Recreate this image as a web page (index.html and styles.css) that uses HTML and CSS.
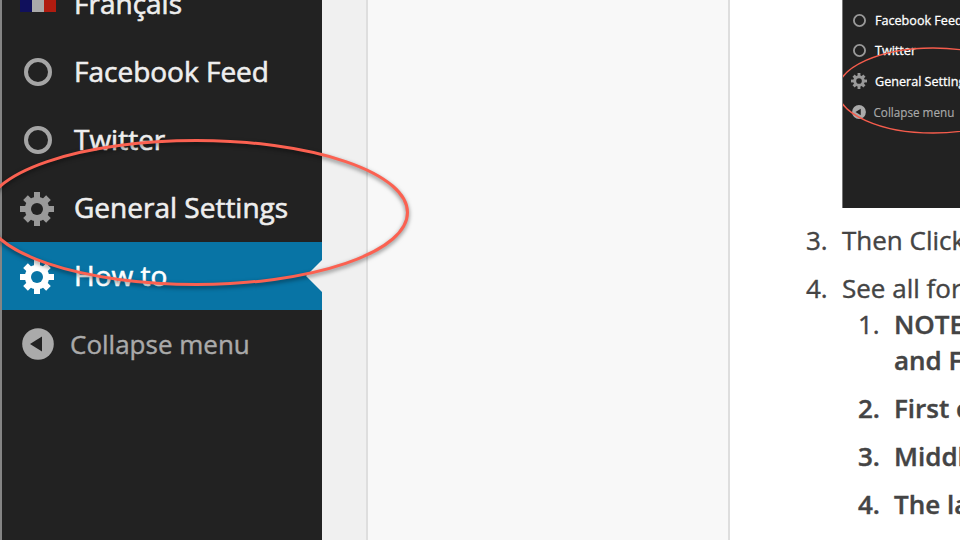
FILE: index.html
```
<!DOCTYPE html>
<html lang="en">
<head>
<meta charset="utf-8">
<title>How to</title>
<link rel="stylesheet" href="styles.css">
</head>
<body>
<svg class="defs" aria-hidden="true">
  <defs>
    <symbol id="gear" viewBox="0 0 34 34">
      <g fill="currentColor">
        <rect x="14" y="0" width="6" height="34"/>
        <rect x="0" y="14" width="34" height="6"/>
        <rect x="13.700" y="0.800" width="6.600" height="32.400" transform="rotate(45 17 17)"/>
        <rect x="13.700" y="0.800" width="6.600" height="32.400" transform="rotate(-45 17 17)"/>
        <circle cx="17" cy="17" r="12.2"/>
      </g>
      <circle cx="17" cy="17" r="6" class="hole"/>
    </symbol>
    <symbol id="ring" viewBox="0 0 28 28">
      <circle cx="14" cy="14" r="12" fill="none" stroke="currentColor" stroke-width="4"/>
    </symbol>
    <symbol id="back" viewBox="0 0 32 32">
      <circle cx="16" cy="16" r="15.8" fill="currentColor"/>
      <path d="M8 16 20 8.500V23.500Z" fill="#222"/>
    </symbol>
  </defs>
</svg>
<div class="page">
  <nav class="menu">
    <a class="item"><span class="icon"><i class="flag"></i></span><span class="label">Français</span></a>
    <a class="item"><span class="icon"><svg class="ring"><use href="#ring"/></svg></span><span class="label">Facebook Feed</span></a>
    <a class="item"><span class="icon"><svg class="ring"><use href="#ring"/></svg></span><span class="label">Twitter</span></a>
    <a class="item"><span class="icon"><svg class="gear"><use href="#gear"/></svg></span><span class="label">General Settings</span></a>
    <a class="item current"><span class="icon"><svg class="gear"><use href="#gear"/></svg></span><span class="label">How to</span></a>
    <a class="item collapse"><span class="icon"><svg class="back"><use href="#back"/></svg></span><span class="label">Collapse menu</span></a>
  </nav>
  <div class="gutter"></div>
  <div class="panel"></div>
  <main class="content">
    <div class="shot">
      <div class="row"><span class="mini"><svg class="mini-ring"><use href="#ring"/></svg></span><span>Facebook Feed</span></div>
      <div class="row"><span class="mini"><svg class="mini-ring"><use href="#ring"/></svg></span><span>Twitter</span></div>
      <div class="row"><span class="mini"><svg class="mini-gear"><use href="#gear"/></svg></span><span>General Setting</span></div>
      <div class="row mini-collapse"><span class="mini"><svg class="mini-back"><use href="#back"/></svg></span><span>Collapse menu</span></div>
      <svg class="mini-oval" viewBox="0 0 118 208"><ellipse cx="91" cy="90.500" rx="95" ry="42.500"/></svg>
    </div>
    <div class="steps">
      <div class="step"><span class="num">3.</span><span>Then Click</span></div>
      <div class="step"><span class="num">4.</span><span>See all for</span></div>
    </div>
    <div class="substeps">
      <div class="step bold"><span class="num plain">1.</span><span>NOTE<br>and F</span></div>
      <div class="step bold"><span class="num">2.</span><span>First c</span></div>
      <div class="step bold"><span class="num">3.</span><span>Middl</span></div>
      <div class="step bold"><span class="num">4.</span><span>The la</span></div>
    </div>
  </main>
</div>
<svg class="oval" viewBox="0 0 430 310"><ellipse cx="196.500" cy="212.500" rx="211" ry="72"/></svg>
</body>
</html>
```
FILE: styles.css
```
* { box-sizing: border-box; }
html, body { margin: 0; height: 540px; overflow: hidden; }
body { font-family: "Open Sans", sans-serif; background: #fff; color: #444; }
svg { display: block; }
.defs { position: absolute; width: 0; height: 0; }
.page { display: flex; height: 540px; }
.menu {
  width: 322px; height: 540px; overflow: hidden; flex: none;
  background: #222; border-left: 2px solid #858585;
  display: flex; flex-direction: column;
}
.item {
  height: 68px; flex: none; display: flex; align-items: center;
  color: #eee; font-size: 28px; line-height: 36px; white-space: nowrap;
  -webkit-text-stroke: 0.6px currentColor;
}
.item:first-child { margin-top: -30px; }
.label { padding-bottom: 2px; }
.icon { width: 72px; flex: none; padding-left: 18px; color: #999; -webkit-text-stroke: 0; }
.ring { width: 28px; height: 28px; margin-left: 4px; color: #a5a5a5; }
.gear { width: 34px; height: 34px; margin-top: 2px; }
.back { width: 32px; height: 32px; margin-left: 2px; color: #aaa; }
.hole { fill: var(--hole, #222); }
.flag {
  display: block; width: 36px; height: 24px; margin-bottom: 8px;
  background: linear-gradient(90deg, #10105c 0 12px, #aaa 12px 24px, #b01c10 24px);
}
.current { background: #0874a5; color: #fff; --hole: #0874a5; position: relative; }
.current .icon { color: #fff; }
.current::after {
  content: ""; position: absolute; right: 0; top: 18px;
  border: 16px solid transparent; border-left: 0; border-right-color: #f0f0f0;
}
.collapse { color: #aaa; font-size: 26px; -webkit-text-stroke: 0.4px currentColor; }
.collapse .label { padding-bottom: 0; }
.collapse .icon { width: 68px; }
.gutter { width: 46px; flex: none; background: #f0f0f0; border-right: 2px solid #dedede; }
.panel { width: 362px; flex: none; background: #f8f8f8; border-right: 2px solid #dedede; }
.content { flex: 1; min-width: 0; overflow: hidden; padding-left: 70px; }
.shot {
  position: relative; margin-left: 42px; width: 118px; height: 208px; overflow: hidden;
  background: #222; border-left: 1px solid #777; padding-top: 5px;
}
.row {
  height: 30.6px; display: flex; align-items: center; color: #fff;
  font-size: 12.6px; white-space: nowrap; -webkit-text-stroke: 0.3px currentColor;
}
.mini { width: 32px; flex: none; padding-left: 8px; color: #999; }
.mini-ring { width: 13px; height: 13px; margin-left: 1.5px; }
.mini-gear { width: 16px; height: 16px; }
.mini-back { width: 14px; height: 14px; margin-left: 1px; color: #aaa; }
.mini-collapse { color: #aaa; font-size: 11.7px; -webkit-text-stroke: 0.15px currentColor; }
.mini-collapse .mini { width: 30.5px; }
.mini-oval { position: absolute; left: -1px; top: 0; width: 118px; height: 208px; }
.mini-oval ellipse { fill: none; stroke: #f55c4c; stroke-width: 1.4; }
.steps { padding-top: 14px; }
.step {
  display: flex; margin-bottom: 12px; font-size: 26px; line-height: 36px; white-space: nowrap;
  -webkit-text-stroke: 0.4px currentColor;
}
.num { width: 36px; flex: none; }
.steps .num { padding-left: 6px; width: 42px; }
.steps .step:last-child { margin-bottom: 0; }
.substeps { padding-left: 58px; }
.bold { font-weight: 600; }
.plain { font-weight: 400; }
.oval { position: absolute; left: 0; top: 0; width: 430px; height: 310px; }
.oval ellipse {
  fill: none; stroke: #fb6151; stroke-width: 3;
  filter: drop-shadow(0 2px 2px rgba(0, 0, 0, 0.5));
}
```
